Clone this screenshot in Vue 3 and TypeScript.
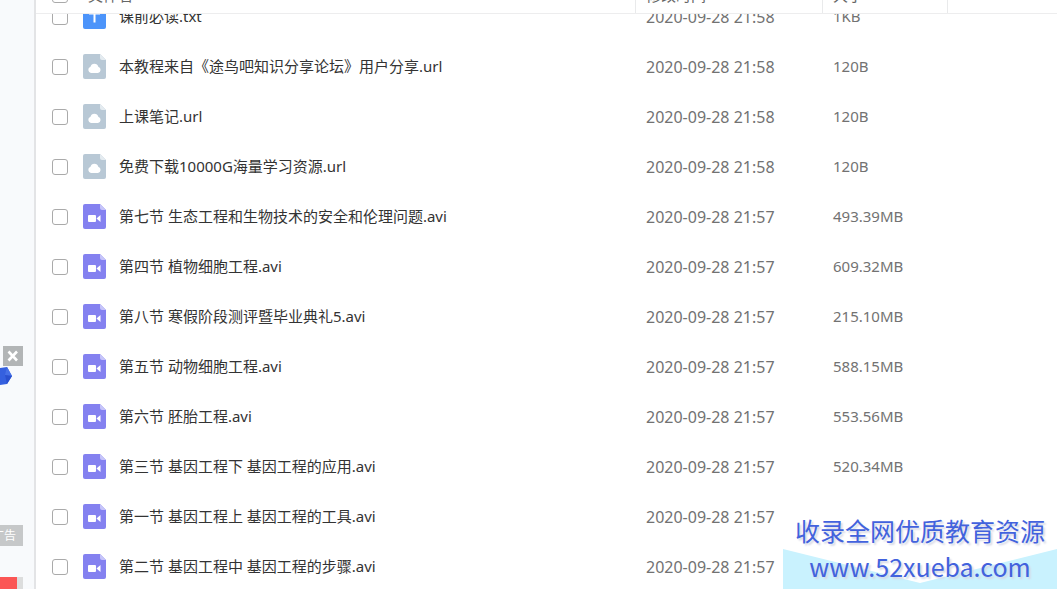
<script setup lang="ts">
import { ref } from 'vue'

type Kind = 'txt' | 'url' | 'avi'

interface FileRow {
  name: string
  kind: Kind
  date: string
  size: string
}

const files: FileRow[] = [
  { name: '课前必读.txt', kind: 'txt', date: '2020-09-28 21:58', size: '1KB' },
  { name: '本教程来自《途鸟吧知识分享论坛》用户分享.url', kind: 'url', date: '2020-09-28 21:58', size: '120B' },
  { name: '上课笔记.url', kind: 'url', date: '2020-09-28 21:58', size: '120B' },
  { name: '免费下载10000G海量学习资源.url', kind: 'url', date: '2020-09-28 21:58', size: '120B' },
  { name: '第七节 生态工程和生物技术的安全和伦理问题.avi', kind: 'avi', date: '2020-09-28 21:57', size: '493.39MB' },
  { name: '第四节 植物细胞工程.avi', kind: 'avi', date: '2020-09-28 21:57', size: '609.32MB' },
  { name: '第八节 寒假阶段测评暨毕业典礼5.avi', kind: 'avi', date: '2020-09-28 21:57', size: '215.10MB' },
  { name: '第五节 动物细胞工程.avi', kind: 'avi', date: '2020-09-28 21:57', size: '588.15MB' },
  { name: '第六节 胚胎工程.avi', kind: 'avi', date: '2020-09-28 21:57', size: '553.56MB' },
  { name: '第三节 基因工程下 基因工程的应用.avi', kind: 'avi', date: '2020-09-28 21:57', size: '520.34MB' },
  { name: '第一节 基因工程上 基因工程的工具.avi', kind: 'avi', date: '2020-09-28 21:57', size: '' },
  { name: '第二节 基因工程中 基因工程的步骤.avi', kind: 'avi', date: '2020-09-28 21:57', size: '' },
]

const selected = ref<string[]>([])
const adOpen = ref(true)

function toggleAll(event: Event) {
  const on = (event.target as HTMLInputElement).checked
  selected.value = on ? files.map((f) => f.name) : []
}
</script>

<template>
  <div class="page">
    <aside class="sidebar">
      <div v-if="adOpen" class="ad">
        <div class="ad-top">
          <button class="ad-close" type="button" aria-label="关闭" @click="adOpen = false">
            <svg viewBox="0 0 20 20" width="20" height="20">
              <path d="M5.500 5.500 L14 14.500 M14 5.500 L5.500 14.500" stroke="#fff" stroke-width="2.600" fill="none" />
            </svg>
          </button>
        </div>
        <svg class="gem" viewBox="0 0 12 20" width="12" height="20">
          <path d="M0 2 L7 1 L12 10 L7 18 L0 19 Z" fill="#3560df" />
          <path d="M7 1 L12 10 L5 9 Z" fill="#4670e6" />
          <path d="M5 9 L12 10 L7 18 Z" fill="#2a50cf" />
        </svg>
        <span class="ad-tag">广告</span>
      </div>
      <div class="banner"></div>
    </aside>

    <table class="files">
      <thead>
        <tr>
          <th class="name">
            <input id="all" class="check" type="checkbox" aria-label="全选" @change="toggleAll" />
            <label for="all">文件名</label>
          </th>
          <th class="date">
            修改时间
            <svg class="sort" viewBox="0 0 10 12" width="10" height="12">
              <path d="M5 0 V11 M2 8 L5 11 L8 8" fill="none" stroke="#3aa0e8" stroke-width="1" />
            </svg>
          </th>
          <th class="size">大小</th>
          <th></th>
        </tr>
      </thead>
      <tbody>
        <tr v-for="(file, i) in files" :key="file.name">
          <td class="name">
            <input :id="`file-${i}`" v-model="selected" class="check" type="checkbox" :value="file.name" />
            <svg class="icon" :class="file.kind" viewBox="0 0 23 25" width="23" height="25">
              <path class="sheet" d="M2 0 H17 L23 6 V23 Q23 25 21 25 H2 Q0 25 0 23 V2 Q0 0 2 0 Z" />
              <path class="fold" d="M17 0 L23 6 H19 Q17 6 17 4 Z" />
              <path v-if="file.kind === 'txt'" d="M6 8 H17 V10.500 H12.500 V18.500 H10.500 V10.500 H6 Z" fill="#fff" />
              <path
                v-else-if="file.kind === 'url'"
                d="M8 19 A3.200 3.200 0 0 1 7.500 12.800 A4 4 0 0 1 15.300 12.800 A3.200 3.200 0 0 1 15 19 Z"
                fill="#fff"
              />
              <g v-else fill="#fff">
                <rect x="5" y="11" width="8" height="7" rx="1" />
                <path d="M13.500 14.500 L17.500 11 V18 Z" />
              </g>
            </svg>
            <label :for="`file-${i}`">{{ file.name }}</label>
          </td>
          <td class="date">{{ file.date }}</td>
          <td class="size">{{ file.size }}</td>
          <td></td>
        </tr>
      </tbody>
    </table>

    <div class="promo">
      <svg class="promo-bg" viewBox="0 0 274 40" preserveAspectRatio="none">
        <path d="M0 0 L137 34 L274 0 V40 H0 Z" fill="#c9f2fe" />
      </svg>
      <span class="promo-title">收录全网优质教育资源</span>
      <a class="promo-link" href="http://www.52xueba.com">www.52xueba.com</a>
    </div>
  </div>
</template>

<style>
body {
  margin: 0;
  background: #fff;
}
</style>

<style scoped>
.page {
  position: relative;
  display: flex;
  height: 100vh;
  overflow: hidden;
  background: #fff;
  color: #333;
  font: 15px/20px "Noto Sans", "Noto Sans CJK SC", sans-serif;
}

.sidebar {
  display: flex;
  flex: none;
  flex-direction: column;
  justify-content: flex-end;
  width: 34px;
  border-right: 2px solid #e3e4e6;
  background: #f8fafc;
}

.ad {
  display: flex;
  flex-direction: column;
  align-items: flex-start;
  width: 23px;
  height: 200px;
  margin-bottom: 31px;
}

.ad-top {
  display: flex;
  justify-content: flex-end;
  width: 100%;
}

.ad-close {
  display: flex;
  width: 20px;
  height: 20px;
  padding: 0;
  border: 0;
  background: #b2b5b6;
}

.ad-tag {
  display: flex;
  justify-content: flex-end;
  box-sizing: border-box;
  width: 23px;
  margin-top: auto;
  padding-right: 7px;
  overflow: hidden;
  background: #c6c8c9;
  color: #fff;
  font-size: 12px;
  line-height: 21px;
  white-space: nowrap;
}

.banner {
  width: 17px;
  height: 12px;
  border-right: 6px solid #dcdddd;
  background: #fb5655;
}

.files {
  display: flex;
  flex: 1;
  flex-direction: column;
  min-width: 0;
}

thead {
  display: flex;
  flex: none;
  flex-direction: column;
  justify-content: flex-end;
  box-sizing: border-box;
  height: 14px;
  overflow: hidden;
  border-bottom: 1px solid #ededee;
}

tbody {
  display: block;
  flex: 1;
  min-height: 0;
  overflow: hidden;
}

tr {
  display: grid;
  grid-template-columns: 600fr 187fr 125fr 109fr;
  height: 50px;
}

thead tr {
  flex: none;
  height: 36px;
}

tbody tr:first-child {
  margin-top: -22px;
}

th,
td {
  display: flex;
  align-items: center;
  box-sizing: border-box;
  min-width: 0;
  padding: 0;
  font-weight: 400;
  text-align: left;
  white-space: nowrap;
}

th {
  border-right: 1px solid #e9eaeb;
  color: #666;
}

th:last-child {
  border-right: 0;
}

th.name label {
  margin-left: 20px;
}

th.date {
  justify-content: space-between;
  padding-right: 8px;
}

.name {
  padding-left: 16px;
}

.date,
.size {
  padding-left: 10px;
}

td.date,
td.size {
  color: #727272;
}

td.date {
  font-size: 16px;
}

td.size,
td label {
  padding-bottom: 2px;
}

.check {
  flex: none;
  box-sizing: border-box;
  width: 16px;
  height: 16px;
  margin: 0;
  appearance: none;
  border: 1px solid #aaa;
  border-radius: 3px;
  background: #fff;
}

.check:checked {
  border-color: #4a90f8;
  background: #4a90f8;
}

.icon {
  flex: none;
  margin: 0 13px 2px 15px;
}

.sheet {
  fill: #b8c8d5;
}

.fold {
  fill: #e4ebf0;
}

.avi .sheet {
  fill: #8481f0;
}

.avi .fold {
  fill: #c6c4fa;
}

.txt .sheet {
  fill: #4c94fa;
}

.promo {
  position: absolute;
  right: 0;
  bottom: 0;
  display: flex;
  flex-direction: column;
  align-items: center;
  box-sizing: border-box;
  width: 274px;
  height: 77px;
  background: #fff;
  color: #4262dd;
  text-shadow: 2px 2px 2px #d5d7e5;
  white-space: nowrap;
}

.promo-bg {
  position: absolute;
  bottom: 0;
  left: 0;
  width: 100%;
  height: 40px;
}

.promo-title,
.promo-link {
  position: relative;
  color: inherit;
  font-family: "Noto Sans CJK SC", sans-serif;
  font-size: 25px;
  line-height: 36px;
  text-decoration: none;
}
</style>
